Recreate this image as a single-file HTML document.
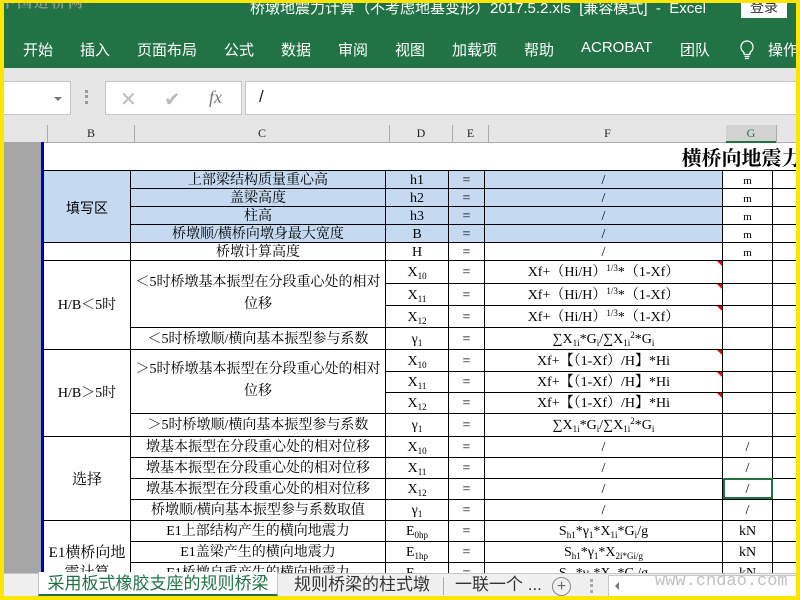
<!DOCTYPE html>
<html><head><meta charset="utf-8"><style>
*{margin:0;padding:0;box-sizing:border-box}
body{width:800px;height:600px;overflow:hidden;background:#fff;position:relative;font-family:"Liberation Sans","Noto Sans CJK SC",sans-serif}
.a{position:absolute}
table{border-collapse:collapse;table-layout:fixed;font-family:"Liberation Serif","Noto Serif CJK SC",serif;font-size:14px;color:#000}
td{border:1px solid #000;text-align:center;vertical-align:middle;padding:3px 0 0 0;overflow:hidden;white-space:nowrap;line-height:14px}
.bl td.c{background:#c5d9f1}
sub{font-size:9px;vertical-align:-3px;line-height:0}
sup{font-size:9px;vertical-align:5px;line-height:0}
.tab{position:absolute;top:36px;color:#fff;font-size:15px;white-space:nowrap}
.tri{position:absolute;right:0;top:0;width:0;height:0;border-left:5px solid transparent;border-top:5px solid #e00}
.w{white-space:normal!important;line-height:22px!important;padding:0 4px!important}
</style></head><body>
<div class="a" style="left:0;top:0;width:800px;height:600px;background:#ffe600"></div>
<div class="a" style="left:4px;top:3px;width:792px;height:593px;background:#fff;overflow:hidden">
 <div class="a" style="left:-4px;top:-3px;width:800px;height:71px;background:#217346"></div>
 <div class="a" style="left:-4px;top:-12px;font-size:15px;color:#8a9a8e;font-family:'Liberation Serif','Noto Serif CJK SC',serif;font-weight:bold;letter-spacing:2px">中国道桥网</div>
 <div class="a" style="left:246px;top:-6px;font-size:15px;color:#fff;white-space:nowrap">桥墩地震力计算（不考虑地基变形）2017.5.2.xls&nbsp; [兼容模式]&nbsp; -&nbsp; Excel</div>
 <div class="a" style="left:737px;top:-3px;width:46px;height:18px;background:#fff;color:#333;font-size:14px;text-align:center;line-height:14px">登录</div>
 <div class="tab" style="left:19px">开始</div>
 <div class="tab" style="left:76px">插入</div>
 <div class="tab" style="left:133px">页面布局</div>
 <div class="tab" style="left:220px">公式</div>
 <div class="tab" style="left:277px">数据</div>
 <div class="tab" style="left:334px">审阅</div>
 <div class="tab" style="left:391px">视图</div>
 <div class="tab" style="left:448px">加载项</div>
 <div class="tab" style="left:520px">帮助</div>
 <div class="tab" style="left:577px">ACROBAT</div>
 <div class="tab" style="left:676px">团队</div>
 <svg class="a" style="left:735px;top:36px" width="16" height="22" viewBox="0 0 16 22"><path d="M8 2a6 6 0 0 0-4 10.5c1 1 1.3 2 1.3 3h5.4c0-1 .3-2 1.3-3A6 6 0 0 0 8 2z M5.5 17.5h5 M6 19.5h4" fill="none" stroke="#fff" stroke-width="1.3"/></svg>
 <div class="tab" style="left:764px">操作</div>
 <div class="a" style="left:-4px;top:65px;width:800px;height:57px;background:#e6e6e6"></div>
 <div class="a" style="left:-4px;top:78px;width:71px;height:34px;background:#fff;border:1px solid #c6c6c6"></div>
 <div class="a" style="left:50px;top:94px;border-left:4px solid transparent;border-right:4px solid transparent;border-top:4px solid #777"></div>
 <div class="a" style="left:81px;top:87px;width:3px;height:14px;border-left:3px dotted #999"></div>
 <div class="a" style="left:101px;top:78px;width:137px;height:34px;background:#fff;border:1px solid #c6c6c6"></div>
 <div class="a" style="left:116px;top:84px;font-size:20px;color:#bbb">✕</div>
 <div class="a" style="left:160px;top:84px;font-size:20px;color:#bbb">✔</div>
 <div class="a" style="left:205px;top:84px;font-size:18px;color:#777;font-style:italic;font-family:'Liberation Serif',serif">fx</div>
 <div class="a" style="left:241px;top:78px;width:555px;height:34px;background:#fff;border:1px solid #c6c6c6"></div>
 <div class="a" style="left:255px;top:84px;font-size:17px;color:#222">/</div>
 <div class="a" style="left:-4px;top:122px;width:800px;height:18px;background:#e6e6e6;border-bottom:1px solid #ababab;font-family:'Liberation Serif',serif;font-size:12px;color:#222">
  <div class="a" style="left:47px;width:87px;text-align:center;border-left:1px solid #ababab;height:17px;line-height:17px">B</div>
  <div class="a" style="left:134px;width:255px;text-align:center;border-left:1px solid #ababab;height:17px;line-height:17px">C</div>
  <div class="a" style="left:389px;width:63px;text-align:center;border-left:1px solid #ababab;height:17px;line-height:17px">D</div>
  <div class="a" style="left:452px;width:36px;text-align:center;border-left:1px solid #ababab;height:17px;line-height:17px">E</div>
  <div class="a" style="left:488px;width:238px;text-align:center;border-left:1px solid #ababab;height:17px;line-height:17px">F</div>
  <div class="a" style="left:726px;width:50px;text-align:center;background:#d2d2d2;border-bottom:2px solid #217346;color:#217346;height:18px;line-height:17px">G</div>
  <div class="a" style="left:776px;width:24px;border-left:1px solid #ababab;height:17px"></div>
 </div>
 <div class="a" style="left:0;top:139px;width:37px;height:440px;background:#a6a6a6"></div>
 <div class="a" style="left:37px;top:139px;width:3px;height:440px;background:#0000cc"></div>
 <table class="a" style="left:39px;top:139px;width:800px">
  <colgroup><col style="width:87px"><col style="width:255px"><col style="width:63px"><col style="width:36px"><col style="width:238px"><col style="width:50px"><col style="width:71px"></colgroup>
  <tr style="height:28px"><td colspan="7" style="border:none;border-bottom:1px solid #000;text-align:left;padding-left:638px;font-size:20px;font-weight:bold;font-family:'Noto Serif CJK SC',serif;line-height:24px">横桥向地震力计算</td></tr>
  <tr class="bl" style="height:18px"><td rowspan="4" style="background:#c5d9f1;font-family:'Noto Sans CJK SC',sans-serif">填写区</td><td class="c">上部梁结构质量重心高</td><td class="c">h1</td><td class="c">=</td><td class="c">/</td><td style="font-size:11px">m</td><td></td></tr>
  <tr class="bl" style="height:18px"><td class="c">盖梁高度</td><td class="c">h2</td><td class="c">=</td><td class="c">/</td><td style="font-size:11px">m</td><td></td></tr>
  <tr class="bl" style="height:18px"><td class="c">柱高</td><td class="c">h3</td><td class="c">=</td><td class="c">/</td><td style="font-size:11px">m</td><td></td></tr>
  <tr class="bl" style="height:18px"><td class="c">桥墩顺/横桥向墩身最大宽度</td><td class="c">B</td><td class="c">=</td><td class="c">/</td><td style="font-size:11px">m</td><td></td></tr>
  <tr style="height:18px"><td></td><td>桥墩计算高度</td><td>H</td><td>=</td><td>/</td><td style="font-size:11px">m</td><td></td></tr>
  <tr style="height:23px"><td rowspan="4">H/B＜5时</td><td rowspan="3" class="w">＜5时桥墩基本振型在分段重心处的相对位移</td><td>X<sub>10</sub></td><td>=</td><td style="position:relative">Xf+（Hi/H）<sup>1/3</sup>*（1-Xf）<div class="tri"></div></td><td></td><td></td></tr>
  <tr style="height:22px"><td>X<sub>11</sub></td><td>=</td><td style="position:relative">Xf+（Hi/H）<sup>1/3</sup>*（1-Xf）<div class="tri"></div></td><td></td><td></td></tr>
  <tr style="height:22px"><td>X<sub>12</sub></td><td>=</td><td style="position:relative">Xf+（Hi/H）<sup>1/3</sup>*（1-Xf）<div class="tri"></div></td><td></td><td></td></tr>
  <tr style="height:22px"><td>＜5时桥墩顺/横向基本振型参与系数</td><td>γ<sub>1</sub></td><td>=</td><td>∑X<sub>1i</sub>*G<sub>i</sub>/∑X<sub>1i</sub><sup>2</sup>*G<sub>i</sub></td><td></td><td></td></tr>
  <tr style="height:22px"><td rowspan="4">H/B＞5时</td><td rowspan="3" class="w">＞5时桥墩基本振型在分段重心处的相对位移</td><td>X<sub>10</sub></td><td>=</td><td style="position:relative">Xf+【（1-Xf）/H】*Hi<div class="tri"></div></td><td></td><td></td></tr>
  <tr style="height:21px"><td>X<sub>11</sub></td><td>=</td><td style="position:relative">Xf+【（1-Xf）/H】*Hi<div class="tri"></div></td><td></td><td></td></tr>
  <tr style="height:21px"><td>X<sub>12</sub></td><td>=</td><td style="position:relative">Xf+【（1-Xf）/H】*Hi<div class="tri"></div></td><td></td><td></td></tr>
  <tr style="height:23px"><td>＞5时桥墩顺/横向基本振型参与系数</td><td>γ<sub>1</sub></td><td>=</td><td>∑X<sub>1i</sub>*G<sub>i</sub>/∑X<sub>1i</sub><sup>2</sup>*G<sub>i</sub></td><td></td><td></td></tr>
  <tr style="height:21px"><td rowspan="4" style="font-size:15px">选择</td><td>墩基本振型在分段重心处的相对位移</td><td>X<sub>10</sub></td><td>=</td><td>/</td><td>/</td><td></td></tr>
  <tr style="height:21px"><td>墩基本振型在分段重心处的相对位移</td><td>X<sub>11</sub></td><td>=</td><td>/</td><td>/</td><td></td></tr>
  <tr style="height:21px"><td>墩基本振型在分段重心处的相对位移</td><td>X<sub>12</sub></td><td>=</td><td>/</td><td style="outline:2px solid #217346;outline-offset:-2px">/</td><td></td></tr>
  <tr style="height:21px"><td>桥墩顺/横向基本振型参与系数取值</td><td>γ<sub>1</sub></td><td>=</td><td>/</td><td>/</td><td></td></tr>
  <tr style="height:21px"><td rowspan="3" style="white-space:normal;vertical-align:top;padding:22px 1px 0;line-height:20px;font-size:15px">E1横桥向地震计算</td><td>E1上部结构产生的横向地震力</td><td>E<sub>0hp</sub></td><td>=</td><td>S<sub>h1</sub>*γ<sub>1</sub>*X<sub>1i</sub>*G<sub>i</sub>/g</td><td>kN</td><td></td></tr>
  <tr style="height:21px"><td>E1盖梁产生的横向地震力</td><td>E<sub>1hp</sub></td><td>=</td><td>S<sub>h1</sub>*γ<sub>1</sub>*X<sub>2i*Gi/g</sub></td><td>kN</td><td></td></tr>
  <tr style="height:21px"><td>E1桥墩自重产生的横向地震力</td><td>E<sub>2hp</sub></td><td>=</td><td>S<sub>h1</sub>*γ<sub>1</sub>*X<sub>3i</sub>*G<sub>i</sub>/g</td><td>kN</td><td></td></tr>
 </table>
 <div class="a" style="left:-4px;top:570px;width:800px;height:26px;background:#f0f0f0;border-top:1px solid #c6c6c6"></div>
 <div class="a" style="left:34px;top:569px;width:240px;height:24px;background:#fff;color:#217346;font-size:17px;text-align:center;line-height:24px;border-bottom:2px solid #217346;border-left:1px solid #c6c6c6;border-right:1px solid #c6c6c6;white-space:nowrap">采用板式橡胶支座的规则桥梁</div>
 <div class="a" style="left:290px;top:571px;font-size:17px;color:#333;line-height:22px;white-space:nowrap">规则桥梁的柱式墩</div>
 <div class="a" style="left:439px;top:574px;width:1px;height:18px;background:#aaa"></div>
 <div class="a" style="left:451px;top:571px;font-size:17px;color:#333;line-height:22px;white-space:nowrap">一联一个 ...</div>
 <div class="a" style="left:548px;top:574px;width:19px;height:19px;border:1px solid #888;border-radius:50%;text-align:center;line-height:17px;font-size:16px;color:#666">+</div>
 <div class="a" style="left:586px;top:576px;width:3px;height:14px;border-left:3px dotted #aaa"></div>
 <div class="a" style="left:604px;top:572px;width:192px;height:22px;background:#fff;border:1px solid #c6c6c6"></div>
 <div class="a" style="left:611px;top:579px;border-top:4px solid transparent;border-bottom:4px solid transparent;border-right:4px solid #777"></div>
 <div class="a" style="left:651px;top:569px;font-size:17px;color:#c0c0c0;font-family:'Liberation Mono',monospace;white-space:nowrap">www.cndao.com</div>
</div>
</body></html>
